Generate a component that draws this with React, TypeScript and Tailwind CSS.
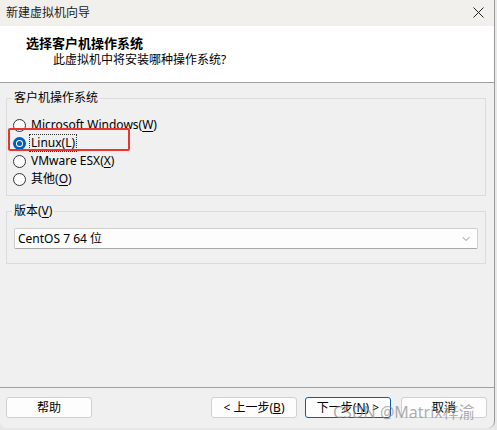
import { ChevronDown } from 'lucide-react'

const font = '"Segoe UI", "Noto Sans", "Noto Sans CJK SC", sans-serif'

function Radio({ checked, label, hotkey, suffix }: { checked?: boolean; label: string; hotkey: string; suffix?: string }) {
  return (
    <div className="flex items-center h-[18px] pl-[6px]">
      {checked ? (
        <span className="w-[13px] h-[13px] rounded-full bg-[#005fb8] flex items-center justify-center">
          <span className="w-[7px] h-[7px] rounded-full bg-white flex items-center justify-center">
            <span className="w-[5px] h-[5px] rounded-full bg-[#005fb8]" />
          </span>
        </span>
      ) : (
        <span className="w-[13px] h-[13px] rounded-full border border-[#333] bg-white" />
      )}
      <span className={`ml-[4px] px-[1px] leading-[16px] ${checked ? 'outline outline-1 outline-dotted outline-[#333]' : ''}`}>
        {label}(<span className="underline underline-offset-2">{hotkey}</span>){suffix}
      </span>
    </div>
  )
}

function Button({ children, primary }: { children: React.ReactNode; primary?: boolean }) {
  return (
    <button
      className={`h-[21px] w-[86px] rounded-[3px] bg-[#fdfdfd] text-[12px] text-black leading-none flex items-center justify-center border ${
        primary ? 'border-[#005fb8]' : 'border-[#d0d0d0]'
      }`}
    >
      {children}
    </button>
  )
}

export default function App() {
  return (
    <div className="w-[497px] h-[430px] bg-[#e8e8e8] relative overflow-hidden" style={{ fontFamily: font }}>
      <div className="w-[495px] h-[428px] bg-[#f0f0f0] border-r border-[#9a9a9a] rounded-b-[7px] overflow-hidden flex flex-col text-[12px] text-black">
        {/* 标题栏 */}
        <div className="h-[26px] bg-[#f2f0ed] flex items-center justify-between pl-[6px] pr-[10px] shrink-0">
          <span className="text-[12px] text-[#1a1a1a]">新建虚拟机向导</span>
          <svg width="11" height="11" viewBox="0 0 11 11" className="mb-[2px]">
            <path d="M0.5 0.5 L10.5 10.5 M10.5 0.5 L0.5 10.5" stroke="#222" strokeWidth="1" />
          </svg>
        </div>

        {/* 页面标题 */}
        <div className="h-[56px] bg-white pt-[9px] shrink-0">
          <div className="pl-[26px] text-[13px] font-bold leading-[17px]">选择客户机操作系统</div>
          <div className="pl-[53px] text-[12px] leading-[16px]">此虚拟机中将安装哪种操作系统?</div>
        </div>
        <div className="h-px bg-[#a0a0a0] shrink-0" />

        {/* 主体 */}
        <div className="flex-1 px-[6px] pt-[7px] pr-[8px]">
          <fieldset className="h-[106px] border border-[#dcdcdc] p-0 m-0">
            <legend className="ml-[5px] px-[2px] leading-[16px]">客户机操作系统</legend>
            <div className="mt-[10px]">
              <Radio label="Microsoft Windows" hotkey="W" />
              <Radio checked label="Linux" hotkey="L" />
              <Radio label="VMware ESX" hotkey="X" />
              <Radio label="其他" hotkey="O" />
            </div>
          </fieldset>

          <fieldset className="mt-[7px] h-[61px] border border-[#dcdcdc] p-0 m-0">
            <legend className="ml-[5px] px-[2px] leading-[16px]">
              版本(<span className="underline underline-offset-2">V</span>)
            </legend>
            <div className="mt-[9px] mx-[7px] h-[21px] bg-[#fdfdfd] border border-[#cfcfcf] border-b-[#a8a8a8] rounded-[2px] flex items-center justify-between pl-[3px] pr-[5px]">
              <span>CentOS 7 64 位</span>
              <ChevronDown size={12} strokeWidth={1.2} color="#444" />
            </div>
          </fieldset>
        </div>

        <div className="h-px bg-[#a0a0a0] shrink-0" />
        {/* 底部按钮 */}
        <div className="h-[40px] flex items-start pt-[9px] pl-[6px] pr-[7px] shrink-0">
          <Button>帮助</Button>
          <div className="ml-auto flex gap-[8px]">
            <Button>&lt; 上一步(<span className="underline">B</span>)</Button>
            <Button primary>下一步(<span className="underline">N</span>) &gt;</Button>
            <div className="ml-[2px]">
              <Button>取消</Button>
            </div>
          </div>
        </div>
      </div>

      {/* 红框标注 */}
      <div className="absolute left-[8px] top-[128px] w-[122px] h-[23px] border-2 border-[#e8352e] rounded-[2px]" />

      {/* 水印 */}
      <div className="absolute left-[333px] top-[402px] text-[16px] leading-[20px] text-[#8a8a8a]/70 whitespace-nowrap">
        CSDN @Matrix梓渝
      </div>
    </div>
  )
}
